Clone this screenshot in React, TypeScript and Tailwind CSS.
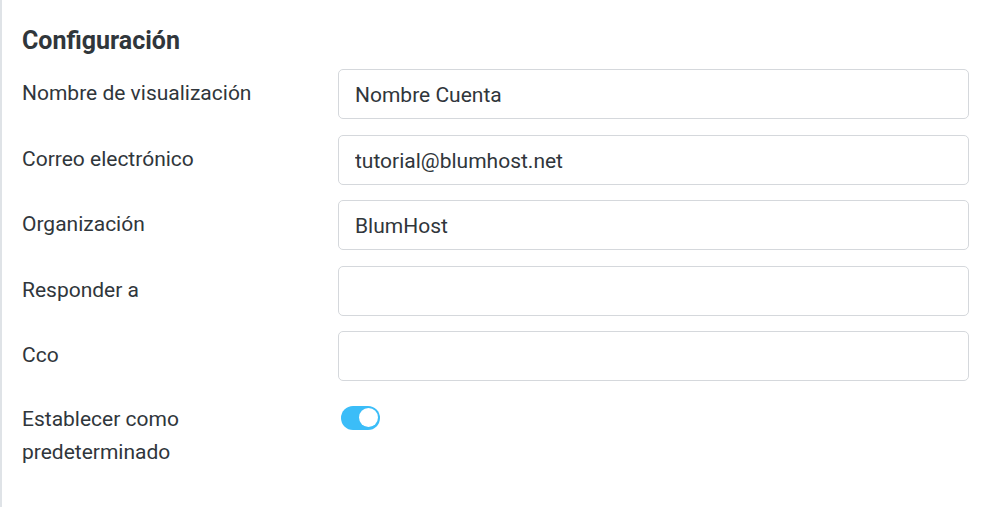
import React, { useState } from 'react';

type Field = { label: string; value: string };

const fields: Field[] = [
  { label: 'Nombre de visualización', value: 'Nombre Cuenta' },
  { label: 'Correo electrónico', value: 'tutorial@blumhost.net' },
  { label: 'Organización', value: 'BlumHost' },
  { label: 'Responder a', value: '' },
  { label: 'Cco', value: '' },
];

const App: React.FC = () => {
  const [values, setValues] = useState(fields.map(f => f.value));
  const [isDefault, setIsDefault] = useState(true);

  return (
    <div className="w-[986px] h-[507px] bg-white overflow-hidden" style={{ fontFamily: 'Roboto, "Noto Sans", sans-serif' }}>
      <div className="h-full border-l-2 border-[#dfe3e7] pl-[20px] pr-[17px] pt-[25px] text-[#30363b]">
        <h2 className="text-[25px] font-bold leading-[32px] mb-[12px]">Configuración</h2>

        <div className="flex flex-col gap-[15.5px]">
          {fields.map((f, i) => (
            <div key={f.label} className="flex">
              <label className="w-[316px] shrink-0 pt-[8px] text-[21px] leading-[33px]">{f.label}</label>
              <input
                type="text"
                value={values[i]}
                onChange={e => setValues(values.map((v, j) => (j === i ? e.target.value : v)))}
                className="flex-1 h-[50px] rounded-[5px] border border-[#d5d8dc] px-[16px] pt-[2px] text-[21px] text-[#30363b] outline-none"
              />
            </div>
          ))}

          <div className="flex">
            <label className="w-[316px] shrink-0 pt-[6px] text-[21px] leading-[33px]">
              Establecer como
              <br />
              predeterminado
            </label>
            <button
              onClick={() => setIsDefault(!isDefault)}
              className={`mt-[9px] ml-[3px] w-[39px] h-[24px] rounded-full flex items-center px-[2px] ${isDefault ? 'bg-[#3bbdf8] justify-end' : 'bg-[#cfd4d9] justify-start'}`}
            >
              <span className="w-[19px] h-[19px] rounded-full bg-white" />
            </button>
          </div>
        </div>
      </div>
    </div>
  );
};

export default App;
